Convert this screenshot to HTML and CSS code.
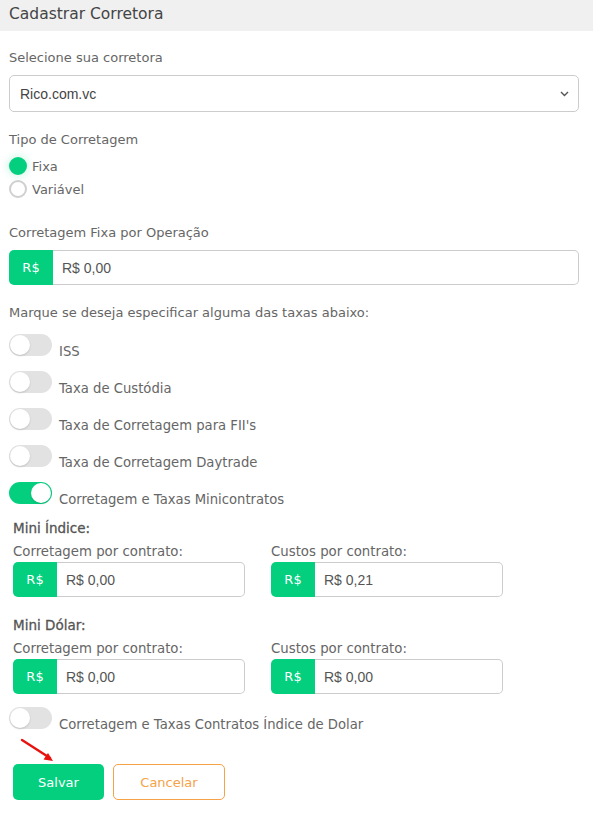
FILE: index.html
```html
<!DOCTYPE html>
<html lang="pt-BR">
<head>
  <meta charset="UTF-8">
  <title>Cadastrar Corretora</title>
  <link rel="stylesheet" href="styles.css">
</head>
<body>

  <div class="title-bar">Cadastrar Corretora</div>

  <form class="content">
    <label class="label first">Selecione sua corretora</label>
    <div class="select-box">
      <span>Rico.com.vc</span>
      <svg width="9" height="6" viewBox="0 0 9 6"><path d="M1 1l3.5 3.5L8 1" fill="none" stroke="#555" stroke-width="1.4"/></svg>
    </div>

    <label class="label gap">Tipo de Corretagem</label>
    <div class="radio-row first-radio"><span class="radio checked"></span>Fixa</div>
    <div class="radio-row"><span class="radio"></span>Variável</div>

    <label class="label gap2">Corretagem Fixa por Operação</label>
    <div class="money">
      <span class="prepend">R$</span>
      <span class="value">R$ 0,00</span>
    </div>

    <label class="label gap">Marque se deseja especificar alguma das taxas abaixo:</label>

    <div class="toggle-row"><span class="toggle"></span><span>ISS</span></div>
    <div class="toggle-row"><span class="toggle"></span><span>Taxa de Custódia</span></div>
    <div class="toggle-row"><span class="toggle"></span><span>Taxa de Corretagem para FII's</span></div>
    <div class="toggle-row"><span class="toggle"></span><span>Taxa de Corretagem Daytrade</span></div>
    <div class="toggle-row"><span class="toggle on"></span><span>Corretagem e Taxas Minicontratos</span></div>

    <div class="mini">
      <div class="mini-title">Mini Índice:</div>
      <div class="mini-cols">
        <div>
          <label class="label small">Corretagem por contrato:</label>
          <div class="money">
            <span class="prepend">R$</span>
            <span class="value">R$ 0,00</span>
          </div>
        </div>
        <div>
          <label class="label small">Custos por contrato:</label>
          <div class="money">
            <span class="prepend">R$</span>
            <span class="value">R$ 0,21</span>
          </div>
        </div>
      </div>

      <div class="mini-title second">Mini Dólar:</div>
      <div class="mini-cols">
        <div>
          <label class="label small">Corretagem por contrato:</label>
          <div class="money">
            <span class="prepend">R$</span>
            <span class="value">R$ 0,00</span>
          </div>
        </div>
        <div>
          <label class="label small">Custos por contrato:</label>
          <div class="money">
            <span class="prepend">R$</span>
            <span class="value">R$ 0,00</span>
          </div>
        </div>
      </div>
    </div>

    <div class="toggle-row"><span class="toggle"></span><span>Corretagem e Taxas Contratos Índice de Dolar</span></div>

    <div class="actions">
      <button type="button" class="btn save">Salvar</button>
      <button type="button" class="btn cancel">Cancelar</button>
    </div>
  </form>

  <svg class="arrow" width="40" height="30" viewBox="0 0 40 30">
    <path d="M2 2L30 20" stroke="#e8120f" stroke-width="2.4" stroke-linecap="round"/>
    <path d="M33 23l-9.5-1.5 4.5-6.5z" fill="#e8120f"/>
  </svg>

</body>
</html>
```

FILE: styles.css
```css
body {
  margin: 0;
  font-family: "DejaVu Sans", sans-serif;
  font-size: 13px;
  color: #666;
  background: #fff;
  position: relative;
}
.title-bar {
  height: 31px;
  line-height: 28px;
  background: #f0f0f0;
  padding: 0 9px;
  font-size: 15.5px;
  color: #444;
}
.content {
  padding: 0 14px 0 9px;
}
.label {
  display: block;
  line-height: 16px;
  margin-bottom: 9px;
}
.label.first { margin-top: 19px; }
.label.gap { margin-top: 20px; }
.label.gap2 { margin-top: 25px; margin-bottom: 9px; }
.label.small { margin: 8px 0 2px; font-size: 13.3px; }

.select-box {
  height: 35px;
  border: 1px solid #ccc;
  border-radius: 5px;
  display: flex;
  align-items: center;
  justify-content: space-between;
  padding: 0 9px 0 10px;
  font-family: "Liberation Sans", Arial, sans-serif;
  font-size: 14px;
  color: #444;
}

.radio-row {
  display: flex;
  align-items: center;
  gap: 5px;
  height: 22px;
  margin-bottom: 1px;
}
.radio-row.first-radio { margin-top: -2px; }
.radio {
  width: 18px;
  height: 18px;
  box-sizing: border-box;
  border: 2px solid #cfcfcf;
  border-radius: 50%;
}
.radio.checked {
  background: #03cf7f;
  border-color: #03cf7f;
  box-shadow: 0 0 6px 3px rgba(3, 207, 127, 0.12);
}

.money {
  display: flex;
  height: 35px;
}
.prepend {
  width: 44px;
  background: #03cf7f;
  color: #fff;
  border-radius: 5px 0 0 5px;
  display: flex;
  align-items: center;
  justify-content: center;
}
.value {
  flex: 1;
  border: 1px solid #ccc;
  border-left: none;
  border-radius: 0 5px 5px 0;
  display: flex;
  align-items: center;
  padding-left: 9px;
  font-family: "Liberation Sans", Arial, sans-serif;
  font-size: 14px;
  color: #555;
}

.toggle-row {
  display: flex;
  align-items: flex-end;
  gap: 7px;
  height: 26px;
  margin-top: 11px;
  font-size: 13.2px;
  line-height: 16px;
}
.label.gap + .toggle-row { margin-top: 13px; }
.toggle {
  align-self: flex-start;
  position: relative;
  width: 43px;
  height: 22px;
  border-radius: 11px;
  background: #e2e2e2;
}
.toggle::after {
  content: "";
  position: absolute;
  left: 1px;
  top: 1px;
  width: 20px;
  height: 20px;
  border-radius: 50%;
  background: #fff;
  box-shadow: 0 1px 2px rgba(0, 0, 0, 0.15);
}
.toggle.on { background: #03cf7f; }
.toggle.on::after { left: 22px; }

.mini {
  padding-left: 4px;
}
.mini-title {
  margin-top: 12px;
  line-height: 16px;
  font-size: 13.5px;
  color: #555;
  -webkit-text-stroke: 0.3px #555;
}
.mini-title.second { margin-top: 20px; }
.mini-cols {
  display: flex;
  gap: 26px;
}
.mini-cols > div { width: 232px; }
.mini + .toggle-row { margin-top: 13px; }

.actions {
  display: flex;
  gap: 9px;
  margin-top: 31px;
  padding-left: 4px;
}
.btn {
  height: 36px;
  border-radius: 5px;
  font-family: "DejaVu Sans", sans-serif;
  font-size: 13px;
}
.save {
  width: 91px;
  background: #03cf7f;
  border: none;
  color: #fff;
}
.cancel {
  width: 112px;
  background: #fff;
  border: 1px solid #f5a248;
  color: #f5a248;
}

.arrow {
  position: absolute;
  left: 20px;
  top: 738px;
}
```
